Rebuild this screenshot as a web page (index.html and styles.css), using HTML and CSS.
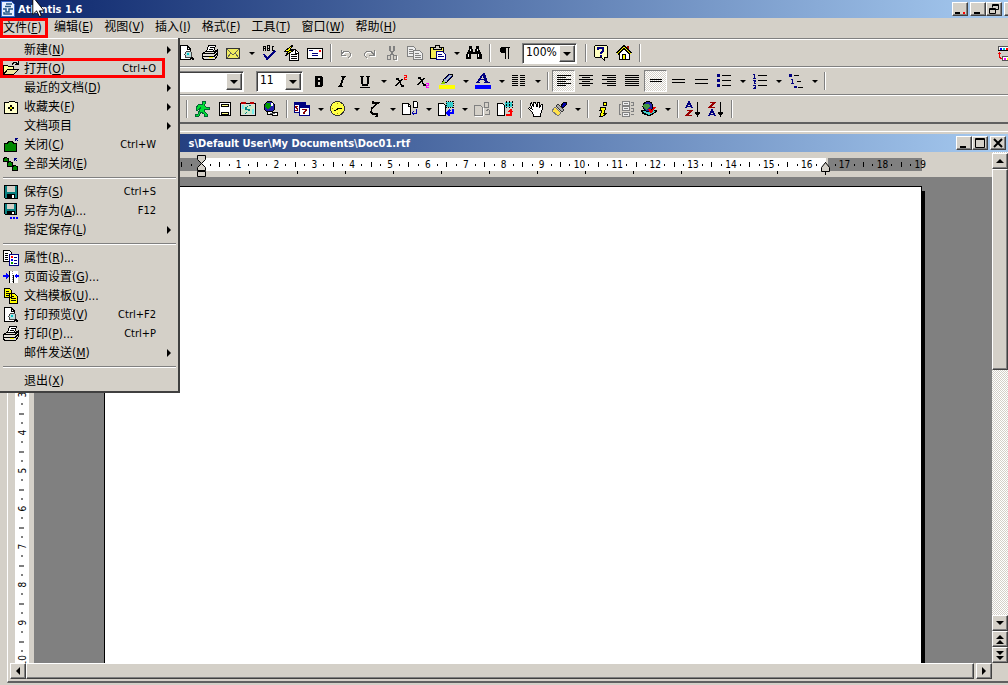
FILE: index.html
```
<!DOCTYPE html>
<html lang="zh-CN">
<head>
<meta charset="UTF-8">
<meta name="viewport" content="width=device-width, initial-scale=1.0">
<title>Atlantis 1.6</title>
<link rel="stylesheet" href="styles.css">
</head>
<body>
<svg class="sprite" aria-hidden="true">
  <symbol id="i-preview" viewBox="0 0 16 16"><path d="M1 .5h7l3 3v11H1z" fill="#fff" stroke="#000"/><path d="M8 1v3h3" fill="none" stroke="#000"/><path d="M12 12l3 3" stroke="#000" stroke-width="2"/><circle cx="9.500" cy="9.500" r="3.500" fill="#bdd" stroke="#444"/><path d="M8 8h2v2H8z" fill="#0cc"/></symbol>
  <symbol id="i-print" viewBox="0 0 16 16"><path d="M4.500 6.500l2-6h7l-2 6z" fill="#fff" stroke="#000"/><path d="M8 2.500h4M7 4.500h4" stroke="#000"/><path d="M.5 8.500l3-2h9l3-2v6l-3 4h-11l-1-2z" fill="#e4e0d8" stroke="#000"/><path d="M1 8.500h11l3-3M1 11.500h11l3-3" fill="none" stroke="#000"/><path d="M7 12h4v1H7z" fill="#ff0"/></symbol>
  <symbol id="i-mail" viewBox="0 0 16 16"><path d="M1.500 3.500h13v10h-13z" fill="#f0ec60" stroke="#333"/><path d="M2 4l6 6 6-6M2 13l4-5M14 13l-4-5" fill="none" stroke="#665"/></symbol>
  <symbol id="i-spell" viewBox="0 0 16 16"><path d="M2.500 6V1.500h2V6M2.500 3.500h2M6.500.5v5h2v-5zM6.500 3.500h2M13 1.500h-2v4h2" fill="none" stroke="#000"/><path d="M3 9l3 5 8-8" fill="none" stroke="#000080" stroke-width="2"/></symbol>
  <symbol id="i-autocor" viewBox="0 0 16 16"><path d="M5.500 4.500h6l3 3v8h-9z" fill="#fff" stroke="#000"/><path d="M11 5v3h3M7 9.500h6M7 11.500h6M7 13.500h6" stroke="#000" fill="none"/><path d="M9 0L1 6h4l-4 5 9-6H6z" fill="#ff0" stroke="#000"/></symbol>
  <symbol id="i-card" viewBox="0 0 16 16"><path d="M.5 3.500h15v10H.5z" fill="#fff" stroke="#000"/><path d="M12 5h2v2h-2z" fill="#f00"/><path d="M2 5.500h4M5 8.500h6M5 10.500h6" stroke="#000080"/></symbol>
  <symbol id="i-undo" viewBox="0 0 16 16"><path d="M3 5v5h5M3 10c3-6 11-4 9 1l-2 2" fill="none" stroke="#fff" transform="translate(1 1)"/><path d="M3 5v5h5M3 10c3-6 11-4 9 1l-2 2" fill="none" stroke="#808080"/></symbol>
  <symbol id="i-redo" viewBox="0 0 16 16"><path d="M13 5v5H8M13 10C10 4 2 6 4 11l2 2" fill="none" stroke="#fff" transform="translate(1 1)"/><path d="M13 5v5H8M13 10C10 4 2 6 4 11l2 2" fill="none" stroke="#808080"/></symbol>
  <symbol id="i-cut" viewBox="0 0 16 16"><path d="M6 1v4l4 6M10 1v4l-4 6" fill="none" stroke="#808080" stroke-width="1.500"/><path d="M3.500 10.500h3v4h-3zM9.500 10.500h3v4h-3z" fill="none" stroke="#808080"/><path d="M13.500 11v4h-3" fill="none" stroke="#fff"/></symbol>
  <symbol id="i-copy" viewBox="0 0 16 16"><path d="M.5 1.500h6l2 2v8h-8z" fill="#eee" stroke="#808080"/><path d="M2 4.500h4M2 6.500h4M2 8.500h4" stroke="#808080"/><path d="M6.500 5.500h6l3 3v6h-9z" fill="#eee" stroke="#808080"/><path d="M8 8.500h4M8 10.500h6M8 12.500h6" stroke="#808080"/></symbol>
  <symbol id="i-paste" viewBox="0 0 16 16"><path d="M.5 2.500h13v11H.5z" fill="#f5ee58" stroke="#000"/><path d="M3 4V2h2V.5h4V2h2v2z" fill="#d4d0c8" stroke="#000"/><path d="M6.500 6.500h6l3 3v5h-9z" fill="#fff" stroke="#000080"/><path d="M8 9.500h4M8 11.500h6" stroke="#000080"/></symbol>
  <symbol id="i-find" viewBox="0 0 16 16"><path d="M3 1h3v3h1v3h2V4h1V1h3v3l3 6v4h-5V9H5v5H0v-4l3-6z" fill="#000"/><path d="M4 4h1v2H4zM2 9h1v3H2zM11 4h1v2h-1zM12 9h1v3h-1z" fill="#fff"/></symbol>
  <symbol id="i-para" viewBox="0 0 16 16"><path d="M13 2H6a3 3 0 0 0 0 6h2v6h1V3h2v11h1V3h1z" fill="#000"/></symbol>
  <symbol id="i-help" viewBox="0 0 16 16"><path d="M2.500.5h11l1 1v11h-3v3l-3-3h-6l-1-1v-10z" fill="#ffffc0" stroke="#000"/><path d="M5 5V3h5v3L8 8v1M8 10v2" fill="none" stroke="#000080" stroke-width="2"/></symbol>
  <symbol id="i-home" viewBox="0 0 16 16"><path d="M11 1h2v6h-2z" fill="#900"/><path d="M3.500 7v7.500h10V7l-5-5z" fill="#fff" stroke="#000"/><path d="M1 9l7-7 7 7" fill="none" stroke="#000" stroke-width="3"/><path d="M1 9l7-7 7 7" fill="none" stroke="#ff0"/><path d="M6.500 9.500h3v5h-3z" fill="#ff0" stroke="#000"/></symbol>
  <symbol id="i-bold" viewBox="0 0 16 16"><path d="M4 3h6l2 2v2l-1 1 1 1v3l-2 2H4zM7 5v2h2V5zM7 9v3h2V9z" fill="#000" fill-rule="evenodd"/></symbol>
  <symbol id="i-italic" viewBox="0 0 16 16"><path d="M7 3.500h5M4 13.500h5" stroke="#000"/><path d="M10 3L6 14" stroke="#000" stroke-width="2"/></symbol>
  <symbol id="i-under" viewBox="0 0 16 16"><path d="M3 3.500h4M9 3.500h4M3 14.500h10" stroke="#000"/><path d="M5 3v7l1 2h4l1-2V3" fill="none" stroke="#000" stroke-width="1.500"/></symbol>
  <symbol id="i-sup" viewBox="0 0 16 16"><path d="M3 6h2l4 7h2M9 6L3 13" fill="none" stroke="#000" stroke-width="1.500"/><path d="M11 2.500h2.500v2h-2v2H14" fill="none" stroke="#f00"/></symbol>
  <symbol id="i-sub" viewBox="0 0 16 16"><path d="M2 5h2l4 7h2M8 5L2 12" fill="none" stroke="#000" stroke-width="1.500"/><path d="M10 10.500h2.500v2h-2v2H13" fill="none" stroke="#f0f"/></symbol>
  <symbol id="i-marker" viewBox="0 0 16 16"><path d="M0 12h16v4H0z" fill="#ff0"/><path d="M3 10l2-4 5-5h3v3L8 9z" fill="#abc" stroke="#000"/><path d="M6 6l5-5M8 8l5-5" stroke="#000080"/><path d="M1 11l3-3 2 2-1 1z" fill="#8c0"/></symbol>
  <symbol id="i-color" viewBox="0 0 16 16"><path d="M0 12h16v4H0z" fill="#00f"/><path d="M8 0h2l3 9h2v1H9V9h1L9 7H5L4 9h1v1H1V9h1L6 2zM7.500 3L6 6h3z" fill="#000080"/></symbol>
  <symbol id="i-cols" viewBox="0 0 16 16"><path d="M1 2.500h6M1 4.500h6M1 6.500h6M1 8.500h6M1 10.500h6M1 12.500h6M9 2.500h5M9 4.500h5M9 6.500h5M9 8.500h5M9 10.500h5M9 12.500h5" stroke="#000"/></symbol>
  <symbol id="i-left" viewBox="0 0 16 16"><path d="M1 2.500h14M1 4.500h9M1 6.500h14M1 8.500h9M1 10.500h14M1 12.500h9" stroke="#000"/></symbol>
  <symbol id="i-center" viewBox="0 0 16 16"><path d="M1 2.500h14M4 4.500h8M1 6.500h14M4 8.500h8M1 10.500h14M4 12.500h8" stroke="#000"/></symbol>
  <symbol id="i-right" viewBox="0 0 16 16"><path d="M1 2.500h14M6 4.500h9M1 6.500h14M6 8.500h9M1 10.500h14M6 12.500h9" stroke="#000"/></symbol>
  <symbol id="i-just" viewBox="0 0 16 16"><path d="M1 2.500h14M1 4.500h14M1 6.500h14M1 8.500h14M1 10.500h14M1 12.500h14" stroke="#000"/></symbol>
  <symbol id="i-sp1" viewBox="0 0 16 16"><path d="M2 6.500h12M2 8.500h12" stroke="#000"/></symbol>
  <symbol id="i-sp2" viewBox="0 0 16 16"><path d="M2 6.500h13M2 9.500h13" stroke="#000"/></symbol>
  <symbol id="i-sp3" viewBox="0 0 16 16"><path d="M2 6.500h13M2 10.500h13" stroke="#000"/></symbol>
  <symbol id="i-bullets" viewBox="0 0 16 16"><path d="M1 1h3v3H1zM1 6h3v3H1zM1 11h3v3H1z" fill="#000080"/><path d="M6 2.500h9M6 7.500h9M6 12.500h9" stroke="#000"/></symbol>
  <symbol id="i-numbers" viewBox="0 0 16 16"><path d="M1 1.500h1.500V5M1 5.500h3M1 7.500h2.500v1H2v2h2M1 12.500h2.500v3H1M2 14.500h1" fill="none" stroke="#000080"/><path d="M6 2.500h9M6 7.500h9M6 12.500h9" stroke="#000"/></symbol>
  <symbol id="i-outline" viewBox="0 0 16 16"><path d="M1 1h3v3H1zM6 13h3v2H6z" fill="#000080"/><path d="M3 6.500h1.500v4M3 10.500h3" fill="none" stroke="#000080"/><path d="M6 2.500h5M9 8.500h4M10 14.500h5" stroke="#000"/></symbol>
  <symbol id="i-run" viewBox="0 0 16 16"><path d="M8 0h3v3l-1 1 2 2h3v2h-4l-1 2 3 3v2h-3v-2l-3-2-2 4H1v-2h3l2-5V7L4 9H2V7l3-4h3z" fill="#0d3" stroke="#063"/></symbol>
  <symbol id="i-headfoot" viewBox="0 0 16 16"><path d="M2.500 1.500h11v13h-11z" fill="#fff" stroke="#000"/><path d="M4.500 3.500h7v2h-7zM4.500 11.500h7v2h-7z" fill="#ff8" stroke="#000"/></symbol>
  <symbol id="i-image" viewBox="0 0 16 16"><path d="M.5 2.500h15v12H.5z" fill="#ddd" stroke="#000"/><path d="M1 1h5v2H1zM10 1h4v2h-4z" fill="#b00"/><path d="M2 4h12v9H2z" fill="#cfe8c8"/><path d="M11 4v1H8v1H7v2h3v2H8v1H6v2H5v-1h2v-1h1V9H5V6h2V5h2V4z" fill="#088"/><path d="M2 4h2v4H2zM12 8h2v5h-2z" fill="#7ee"/></symbol>
  <symbol id="i-web" viewBox="0 0 16 16"><circle cx="6.500" cy="6" r="5.500" fill="#22a" stroke="#000"/><path d="M3 2h4l1 3-3 3-3-2z" fill="#090"/><path d="M8 2h2v3H8z" fill="#fff"/><path d="M4.500 10.500h5v3h-5zM9.500 11.500h5v3h-5z" fill="#fff" stroke="#000"/><path d="M7 12.500h5" stroke="#666"/></symbol>
  <symbol id="i-date" viewBox="0 0 16 16"><path d="M0 1h12v11H0zM5 4h11v11H5z" fill="#000080"/><path d="M1 4h4v7H1zM6 7h9v7H6z" fill="#fff"/><path d="M1 5h3v1H3v1h1v3H1V9h2V8H2V7H1z" fill="#800"/><path d="M8 8h5v2h-1v1h-1v2H9v-2h1v-1h1V9H8z" fill="#800"/></symbol>
  <symbol id="i-clock" viewBox="0 0 16 16"><circle cx="7.500" cy="7.500" r="7" fill="#ff4" stroke="#333"/><path d="M7 7h5v1H7zM6 8h2v1H6zM4 9h2v1H4z" fill="#000"/><path d="M7 2h1v1H7zM7 12h1v1H7zM2 7h1v1H2z" fill="#a80"/></symbol>
  <symbol id="i-zeta" viewBox="0 0 16 16"><path d="M7 0v2h5L6 7l-1 4 2 2h4v2l-2 1" fill="none" stroke="#000" stroke-width="1.500"/></symbol>
  <symbol id="i-flow" viewBox="0 0 16 16"><path d="M.5 2.500h6l2 2v9h-8zM11.500.5h3l1 1v5h-4z" fill="#fff" stroke="#000"/><path d="M6.500 3v2h2" fill="none" stroke="#000"/><path d="M14.500 8v4H10m2-2l-2 2 2 2" fill="none" stroke="#00a"/></symbol>
  <symbol id="i-flow2" viewBox="0 0 16 16"><path d="M.5 2.500h5l2 2v10h-7z" fill="#fff" stroke="#000"/><path d="M8 1h7v5H8z" fill="#3cc"/><path d="M8.500 0v7M15.500 0v7M8 .5h8M8 6.500h8" stroke="#000" stroke-dasharray="1 1"/><path d="M15 8v4h-5m2-3l-3 3 3 3" fill="none" stroke="#00f" stroke-width="1.500"/></symbol>
  <symbol id="i-flow3" viewBox="0 0 16 16"><path d="M.5 4.500h6l2 2v8h-8zM10.500 1.500h4v5h-4z" fill="#d4d0c8" stroke="#808080"/><path d="M15 9v4h-4M12 10l3-2" fill="none" stroke="#808080"/><path d="M1 15.500h8M9.500 7v8" stroke="#fff"/></symbol>
  <symbol id="i-flow4" viewBox="0 0 16 16"><path d="M.5 2.500h5l2 2v10h-7z" fill="#fff" stroke="#000"/><path d="M8 1h7v5H8z" fill="#3cc"/><path d="M9.500 0v7M12.500 0v7M15.500 0v7" stroke="#000" stroke-dasharray="2 1"/><path d="M9 13h4v-2h-2l3-4 2 4h-1v4H9z" fill="#f00"/></symbol>
  <symbol id="i-hand" viewBox="0 0 16 16"><path d="M4 11L.5 7.500l1-1L4 8 2.500 3l1-1L6 6 5.500 1h2L9 6l.5-5h2V7l2-4h1.500l-1 6-2 6.500H6z" fill="#fff" stroke="#000"/></symbol>
  <symbol id="i-brush" viewBox="0 0 16 16"><path d="M10 5l3-4h2v3l-3 3z" fill="#00a" stroke="#000"/><path d="M7 3l6 6-2 2-6-6z" fill="#aaa" stroke="#333"/><path d="M4 6l6 6-3 3-6-5z" fill="#ffe14a" stroke="#777"/></symbol>
  <symbol id="i-info" viewBox="0 0 16 16"><path d="M8 1h3v3H8zM6 6h5l-2 6h2v1l-3 2H5l2-6H5z" fill="#ff0" stroke="#000"/></symbol>
  <symbol id="i-sheets" viewBox="0 0 16 16"><path d="M4.500.5h7v4h-7zM4.500 5.500h7v4h-7zM4.500 11.500h7v4h-7z" fill="#eee" stroke="#808080"/><path d="M6 2.500h4M6 7.500h4M6 13.500h4M3 3.500H1.500v10H3M13 1.500h2.500v3H13M13 7.500h2.500v3H13M13 13.500h3" fill="none" stroke="#808080"/></symbol>
  <symbol id="i-books" viewBox="0 0 16 16"><path d="M0 10l8-3 8 3-8 5z" fill="#4cc" stroke="#000"/><path d="M1 12l7 3 7-4" fill="none" stroke="#000"/><circle cx="7" cy="5.500" r="5" fill="#22a" stroke="#000"/><path d="M3 3h4l2 2-3 4-4-3z" fill="#494"/><path d="M8 8l2 3 4-5" fill="none" stroke="#e00" stroke-width="2"/></symbol>
  <symbol id="i-az" viewBox="0 0 16 16"><path d="M1 7l3-6 3 6M2 5.500h4" fill="none" stroke="#000080" stroke-width="1.500"/><path d="M1.500 9.500h5l-5 5h5" fill="none" stroke="#900" stroke-width="1.500"/><path d="M12.500 1v13M10 11h5l-2.500 4z" stroke="#000"/></symbol>
  <symbol id="i-za" viewBox="0 0 16 16"><path d="M1.500 1.500h5l-5 5h5" fill="none" stroke="#900" stroke-width="1.500"/><path d="M1 15l3-6 3 6M2 13.500h4" fill="none" stroke="#000080" stroke-width="1.500"/><path d="M12.500 1v13M10 11h5l-2.500 4z" stroke="#000"/></symbol>
  <symbol id="i-bars" viewBox="0 0 16 16"><path d="M.5 1.500h15v4H.5zM4.500 11.500h11v4h-11z" fill="#fff" stroke="#555"/><path d="M0 5.500h16" stroke="#000"/><path d="M2 3h2v2H2z" fill="#00f"/><path d="M5 3h2v2H5z" fill="#0cc"/><path d="M8 3h2v2H8z" fill="#f00"/><path d="M6 13h2v2H6z" fill="#f0f"/><path d="M9 13h2v2H9z" fill="#ff0"/><path d="M0 8.500h3M1.500 7v5l2 2" fill="none" stroke="#e00"/></symbol>
  <symbol id="i-open" viewBox="0 0 16 16"><path d="M.5 13.500v-9h4l1 1h5v3" fill="#ff9" stroke="#000"/><path d="M.5 13.500l4-5h11l-5 5z" fill="#eeeaa0" stroke="#000"/><path d="M9 3.500l2-2h2l2 2M15.500 0v3.500H12" fill="none" stroke="#000"/></symbol>
  <symbol id="i-fav" viewBox="0 0 16 16"><path d="M1.500 3.500h4l1-1h5l1 1h2v11h-13z" fill="#ffc" stroke="#000"/><path d="M7 6h2v2h2v2H9v2H7v-2H5V8h2z" fill="#000"/><path d="M7 8h2v2H7z" fill="#ee0"/></symbol>
  <symbol id="i-close" viewBox="0 0 16 16"><path d="M1.500 6.500h3l1-2h4l1 2h3v8h-12z" fill="#080" stroke="#000"/><path d="M15 4l-3-3m0 3V1h3" fill="none" stroke="#000080"/></symbol>
  <symbol id="i-closeall" viewBox="0 0 16 16"><path d="M.5 2.500l2-1 3 1v3h-5zM4.500 6.500l2-1 3 1v4h-5zM9.500 10.500l2-1 3 1v4h-5z" fill="#080" stroke="#000"/><path d="M14 5l-3-3m0 3V2h3" fill="none" stroke="#000080"/></symbol>
  <symbol id="i-save" viewBox="0 0 16 16"><path d="M1.500 1.500h13v13h-12l-1-1z" fill="#088080" stroke="#000"/><path d="M4 2h8v6H4z" fill="#d4d0c8"/><path d="M4 10h8v4H4z" fill="#000"/><path d="M9 11h2v3H9z" fill="#fff"/></symbol>
  <symbol id="i-saveas" viewBox="0 0 16 16"><path d="M1.500.5h12v11h-11l-1-1z" fill="#088080" stroke="#000"/><path d="M4 1h7v5H4z" fill="#d4d0c8"/><path d="M4 8h8v4H4z" fill="#000"/><path d="M9 9h2v2H9z" fill="#fff"/><path d="M7 14h2v2H7zM10 14h2v2h-2zM13 14h2v2h-2z" fill="#00f"/></symbol>
  <symbol id="i-props" viewBox="0 0 16 16"><path d="M.5.5h6l2 2v9h-8z" fill="#fff" stroke="#000"/><path d="M2 3.500h3M2 5.500h3M2 7.500h3M2 9.500h3" stroke="#000"/><path d="M6.500 4.500h9v11h-9z" fill="#fff" stroke="#000080"/><path d="M8 6h2v2H8z" fill="#f00"/><path d="M8 9h2v2H8z" fill="#00f"/><path d="M8 12h2v2H8z" fill="#090"/><path d="M11 7.500h3M11 10.500h3M11 13.500h3" stroke="#000080"/></symbol>
  <symbol id="i-pagesetup" viewBox="0 0 16 16"><path d="M7 2h8v12H7z" fill="#fff"/><path d="M6 2h1v12H6zM10 6h1v8h-1z" fill="#000"/><path d="M9.500 2v12" stroke="#888" stroke-dasharray="1 1"/><path d="M0 6h3V4l3 3-3 3V8H0zM16 6h-2V4l-3 3 3 3V8h2z" fill="#00f"/></symbol>
  <symbol id="i-template" viewBox="0 0 16 16"><path d="M1.500.5h5l2 2v7h-7zM6.500 5.500h5l3 3v7h-8z" fill="#ff0" stroke="#000"/><path d="M3 3.500h3M3 5.500h4M3 7.500h3M8 8.500h3M8 10.500h5M8 12.500h5" stroke="#000"/></symbol>
</svg>

<div class="app">
  <header class="titlebar">
    <svg class="logo" viewBox="0 0 16 16"><path d="M1.500.5h10l3 3v12h-13z" fill="#e8f0ff" stroke="#36c"/><path d="M6 3h6M5 5.500h6M3 8h3v3h3V8h4M4 11v2h8" fill="none" stroke="#258" stroke-width="1.500"/></svg>
    <span class="caption">Atlantis 1.6</span>
    <div class="winbtns">
      <button class="wb gap" aria-label="托盘"><svg viewBox="0 0 12 10"><path d="M1 8h5v2H1z"/><path d="M9 8h2v2H9z" fill="red"/></svg></button>
      <button class="wb" aria-label="最小化"><svg viewBox="0 0 12 10"><path d="M2 8h6v2H2z"/></svg></button>
      <button class="wb gap" aria-label="还原"><svg viewBox="0 0 12 10"><path d="M4.500 3.500v-3h6v5h-3M4 1.500h7M1.500 4.500h6v5h-6zM1 5.500h7" fill="none" stroke="#000"/></svg></button>
      <button class="wb" aria-label="关闭"></button>
    </div>
    <svg class="cursor" viewBox="0 0 12 19"><path d="M.5-3.500v19l4-4 3 6 2-1-2-5h5z" fill="#fff" stroke="#000"/></svg>
  </header>

  <nav class="menubar">
    <button class="open">文件(<u>F</u>)</button>
    <button>编辑(<u>E</u>)</button>
    <button>视图(<u>V</u>)</button>
    <button>插入(<u>I</u>)</button>
    <button>格式(<u>F</u>)</button>
    <button>工具(<u>T</u>)</button>
    <button>窗口(<u>W</u>)</button>
    <button>帮助(<u>H</u>)</button>

    <div class="menu">
      <button class="item sub"><span>新建(<u>N</u>)</span></button>
      <button class="item marked"><svg><use href="#i-open"/></svg><span>打开(<u>O</u>)</span><kbd>Ctrl+O</kbd></button>
      <button class="item sub"><span>最近的文档(<u>D</u>)</span></button>
      <button class="item sub"><svg><use href="#i-fav"/></svg><span>收藏夹(<u>F</u>)</span></button>
      <button class="item sub"><span>文档项目</span></button>
      <button class="item"><svg><use href="#i-close"/></svg><span>关闭(<u>C</u>)</span><kbd>Ctrl+W</kbd></button>
      <button class="item"><svg><use href="#i-closeall"/></svg><span>全部关闭(<u>E</u>)</span></button>
      <hr>
      <button class="item"><svg><use href="#i-save"/></svg><span>保存(<u>S</u>)</span><kbd>Ctrl+S</kbd></button>
      <button class="item"><svg><use href="#i-saveas"/></svg><span>另存为(<u>A</u>)...</span><kbd>F12</kbd></button>
      <button class="item sub"><span>指定保存(<u>L</u>)</span></button>
      <hr>
      <button class="item"><svg><use href="#i-props"/></svg><span>属性(<u>R</u>)...</span></button>
      <button class="item"><svg><use href="#i-pagesetup"/></svg><span>页面设置(<u>G</u>)...</span></button>
      <button class="item"><svg><use href="#i-template"/></svg><span>文档模板(<u>U</u>)...</span></button>
      <button class="item"><svg><use href="#i-preview"/></svg><span>打印预览(<u>V</u>)</span><kbd>Ctrl+F2</kbd></button>
      <button class="item"><svg><use href="#i-print"/></svg><span>打印(<u>P</u>)...</span><kbd>Ctrl+P</kbd></button>
      <button class="item sub"><span>邮件发送(<u>M</u>)</span></button>
      <hr>
      <button class="item"><span>退出(<u>X</u>)</span></button>
    </div>
  </nav>

  <div class="toolbar main-tools">
    <button class="tb" aria-label="打印预览"><svg><use href="#i-preview"/></svg></button>
    <button class="tb" aria-label="打印"><svg><use href="#i-print"/></svg></button>
    <button class="tb" aria-label="邮件"><svg><use href="#i-mail"/></svg></button>
    <button class="drop" aria-label="更多"></button>
    <button class="tb" aria-label="拼写"><svg><use href="#i-spell"/></svg></button>
    <button class="tb" aria-label="自动更正"><svg><use href="#i-autocor"/></svg></button>
    <button class="tb" aria-label="信封"><svg><use href="#i-card"/></svg></button>
    <i class="sep"></i>
    <button class="tb" aria-label="撤消"><svg><use href="#i-undo"/></svg></button>
    <button class="tb" aria-label="恢复"><svg><use href="#i-redo"/></svg></button>
    <button class="tb" aria-label="剪切"><svg><use href="#i-cut"/></svg></button>
    <button class="tb" aria-label="复制"><svg><use href="#i-copy"/></svg></button>
    <button class="tb" aria-label="粘贴"><svg><use href="#i-paste"/></svg></button>
    <button class="drop" aria-label="更多"></button>
    <button class="tb" aria-label="查找"><svg><use href="#i-find"/></svg></button>
    <i class="sep"></i>
    <button class="tb" aria-label="段落标记"><svg><use href="#i-para"/></svg></button>
    <div class="combo zoom"><select aria-label="显示比例"><option>100%</option></select></div>
    <i class="sep"></i>
    <button class="tb" aria-label="帮助"><svg><use href="#i-help"/></svg></button>
    <button class="tb" aria-label="主页"><svg><use href="#i-home"/></svg></button>
    <i class="sep"></i>
    <button class="tb end" aria-label="工具栏"><svg><use href="#i-bars"/></svg></button>
  </div>

  <div class="toolbar format-tools">
    <div class="combo font"><select aria-label="字体"><option></option></select></div>
    <div class="combo size"><select aria-label="字号"><option>11</option></select></div>
    <button class="tb" aria-label="加粗"><svg><use href="#i-bold"/></svg></button>
    <button class="tb" aria-label="倾斜"><svg><use href="#i-italic"/></svg></button>
    <button class="tb" aria-label="下划线"><svg><use href="#i-under"/></svg></button>
    <button class="drop" aria-label="更多"></button>
    <button class="tb" aria-label="上标"><svg><use href="#i-sup"/></svg></button>
    <button class="tb" aria-label="下标"><svg><use href="#i-sub"/></svg></button>
    <button class="tb" aria-label="突出显示"><svg><use href="#i-marker"/></svg></button>
    <button class="drop" aria-label="更多"></button>
    <button class="tb" aria-label="字体颜色"><svg><use href="#i-color"/></svg></button>
    <button class="drop" aria-label="更多"></button>
    <button class="tb" aria-label="分栏"><svg><use href="#i-cols"/></svg></button>
    <button class="drop" aria-label="更多"></button>
    <i class="sep"></i>
    <button class="tb pressed" aria-label="左对齐"><svg><use href="#i-left"/></svg></button>
    <button class="tb" aria-label="居中"><svg><use href="#i-center"/></svg></button>
    <button class="tb" aria-label="右对齐"><svg><use href="#i-right"/></svg></button>
    <button class="tb" aria-label="两端对齐"><svg><use href="#i-just"/></svg></button>
    <button class="tb pressed" aria-label="单倍行距"><svg><use href="#i-sp1"/></svg></button>
    <button class="tb" aria-label="1.5 倍行距"><svg><use href="#i-sp2"/></svg></button>
    <button class="tb" aria-label="双倍行距"><svg><use href="#i-sp3"/></svg></button>
    <button class="tb" aria-label="项目符号"><svg><use href="#i-bullets"/></svg></button>
    <button class="drop" aria-label="更多"></button>
    <button class="tb" aria-label="编号"><svg><use href="#i-numbers"/></svg></button>
    <button class="drop" aria-label="更多"></button>
    <button class="tb" aria-label="多级列表"><svg><use href="#i-outline"/></svg></button>
    <button class="drop" aria-label="更多"></button>
    <i class="sep"></i>
  </div>

  <div class="toolbar insert-tools">
    <i class="sep"></i>
    <button class="tb" aria-label="转到"><svg><use href="#i-run"/></svg></button>
    <button class="tb" aria-label="页眉页脚"><svg><use href="#i-headfoot"/></svg></button>
    <button class="tb" aria-label="图片"><svg><use href="#i-image"/></svg></button>
    <button class="tb" aria-label="超链接"><svg><use href="#i-web"/></svg></button>
    <i class="sep"></i>
    <button class="tb" aria-label="日期"><svg><use href="#i-date"/></svg></button>
    <button class="drop" aria-label="更多"></button>
    <button class="tb" aria-label="时间"><svg><use href="#i-clock"/></svg></button>
    <button class="drop" aria-label="更多"></button>
    <button class="tb" aria-label="符号"><svg><use href="#i-zeta"/></svg></button>
    <button class="drop" aria-label="更多"></button>
    <button class="tb" aria-label="分页"><svg><use href="#i-flow"/></svg></button>
    <button class="drop" aria-label="更多"></button>
    <button class="tb" aria-label="分节"><svg><use href="#i-flow2"/></svg></button>
    <button class="drop" aria-label="更多"></button>
    <button class="tb" aria-label="上一节"><svg><use href="#i-flow3"/></svg></button>
    <button class="tb" aria-label="下一节"><svg><use href="#i-flow4"/></svg></button>
    <i class="sep"></i>
    <button class="tb" aria-label="手形"><svg><use href="#i-hand"/></svg></button>
    <button class="tb" aria-label="格式刷"><svg><use href="#i-brush"/></svg></button>
    <button class="drop" aria-label="更多"></button>
    <i class="sep"></i>
    <button class="tb" aria-label="信息"><svg><use href="#i-info"/></svg></button>
    <button class="tb" aria-label="页面"><svg><use href="#i-sheets"/></svg></button>
    <button class="tb" aria-label="词典"><svg><use href="#i-books"/></svg></button>
    <button class="drop" aria-label="更多"></button>
    <i class="sep"></i>
    <button class="tb" aria-label="升序"><svg><use href="#i-az"/></svg></button>
    <button class="tb" aria-label="降序"><svg><use href="#i-za"/></svg></button>
    <i class="sep"></i>
  </div>

  <main class="doc">
    <div class="titlebar doc-title">
      <span class="caption path">s\Default User\My Documents\Doc01.rtf</span>
      <div class="winbtns">
        <button class="wb" aria-label="最小化"><svg viewBox="0 0 12 10"><path d="M2 8h6v2H2z"/></svg></button>
        <button class="wb gap" aria-label="最大化"><svg viewBox="0 0 12 10"><path d="M1.500.5h9v9h-9zM1 1.500h10" fill="none" stroke="#000"/></svg></button>
        <button class="wb" aria-label="关闭"><svg viewBox="0 0 12 10"><path d="M2 1l8 8M10 1L2 9" stroke="#000" stroke-width="2"/></svg></button>
      </div>
    </div>
    <div class="work">
      <div class="hruler-row">
        <div class="hruler">
          <div class="marks" id="hmarks"></div>
          <svg class="indent" viewBox="0 0 11 24"><path d="M1.500.5h8v4l-4 4 4 4v3h-8v-3l4-4-4-4zM1.500 16.500h8v5h-8z" fill="#d4d0c8" stroke="#000"/></svg>
          <svg class="indent-right" viewBox="0 0 11 13"><path d="M5.500.5l4 5v4h-8v-4zM5.500 9v4" fill="#d4d0c8" stroke="#000"/></svg>
        </div>
      </div>
      <div class="vruler"><div class="vmarks" id="vmarks"></div></div>
      <div class="canvas"><div class="page"></div></div>
      <div class="vscroll">
        <button class="sb up" aria-label="向上"></button>
        <div class="thumb"></div>
        <button class="sb down" aria-label="向下"></button>
        <button class="sb up twice" aria-label="上一页"></button>
        <button class="sb down twice" aria-label="下一页"></button>
      </div>
      <div class="hscroll">
        <button class="sb left" aria-label="向左"></button>
        <div class="thumb"></div>
        <button class="sb right" aria-label="向右"></button>
      </div>
    </div>
  </main>
</div>

<script>
// four marks per centimetre: dot, tick, dot, number
function mark(k) {
  if (k == 0) return '<span></span>';
  if (k > 0 && k % 4 == 0) return '<span>' + k / 4 + '</span>';
  return k % 2 == 0 ? '<span class="tick"></span>' : '<span class="dot"></span>';
}

let h = '';
for (let k = -2; k <= 76; k++) h += mark(k);
document.getElementById("hmarks").innerHTML = h;

let v = '';
for (let k = 1; k <= 40; k++) v += mark(k);
document.getElementById("vmarks").innerHTML = v;
</script>
</body>
</html>
```
FILE: styles.css
```
*, *::before, *::after {
  box-sizing: border-box;
}
body {
  margin: 0;
  background-color: #d4d0c8;
  color: #000;
  font-family: "DejaVu Sans Condensed", "Noto Sans CJK SC", sans-serif;
  font-size: 12px;
}
button {
  font: inherit;
  color: inherit;
  margin: 0;
  padding: 0;
  border: 0;
  background: none;
}
.sprite {
  display: none;
}
.app {
  display: flex;
  flex-direction: column;
  height: 100vh;
  overflow: hidden;
}

/* title bars */
.titlebar {
  display: flex;
  align-items: center;
  flex: none;
  height: 18px;
  position: relative;
  background: linear-gradient(to right, #0a246a, #a6caf0);
  overflow: hidden;
}
.logo {
  width: 16px;
  height: 16px;
  margin-right: 2px;
}
.caption {
  color: #fff;
  font-size: 11px;
  font-weight: bold;
  white-space: pre;
}
.path {
  width: 400px;
  text-align: right;
}
.winbtns {
  display: flex;
  margin-left: auto;
  margin-right: -12px;
}
.doc-title .winbtns {
  margin-right: 2px;
}
.wb {
  width: 16px;
  height: 14px;
  background-color: #d4d0c8;
  border: 1px solid;
  border-color: #fff #404040 #404040 #fff;
  box-shadow: inset -1px -1px #808080;
}
.wb.gap {
  margin-right: 2px;
}
.wb svg {
  display: block;
  width: 12px;
  height: 10px;
  margin: 0 auto;
}
.cursor {
  position: absolute;
  left: 32px;
  top: 0;
  width: 12px;
  height: 18px;
}

/* menu */
.menubar {
  display: flex;
  flex: none;
  gap: 11px;
  height: 21px;
  padding-left: 54px;
  padding-bottom: 2px;
  position: relative;
  z-index: 2;
  border-bottom: 1px solid #808080;
  line-height: 16px;
}
.menubar > .open {
  width: 48px;
  height: 20px;
  margin-left: -54px;
  margin-right: -5px;
  line-height: 14px;
  border: 3px solid #f00;
  text-align: left;
}
.menu {
  position: absolute;
  left: 0;
  top: 20px;
  width: 180px;
  padding: 2px 4px 1px 2px;
  background-color: #d4d0c8;
  border-right: 2px solid #404040;
  border-bottom: 2px solid #404040;
  box-shadow: inset 0 1px #fff;
}
.item {
  display: flex;
  align-items: center;
  width: 100%;
  height: 19px;
  padding-left: 22px;
  position: relative;
  text-align: left;
}
.item svg {
  width: 16px;
  height: 16px;
  margin-left: -21px;
  margin-right: 5px;
}
.item kbd {
  margin-left: auto;
  margin-right: 18px;
  font-family: inherit;
  font-size: 11px;
}
.item.sub::after {
  content: "";
  margin-left: auto;
  margin-right: 3px;
  border: 4px solid transparent;
  border-left-color: #000;
  border-right: 0;
}
.item.marked::before {
  content: "";
  position: absolute;
  left: -2px;
  top: -1px;
  width: 165px;
  height: 20px;
  border: 3px solid #f00;
}
.menu hr {
  margin: 4px -2px 3px 1px;
  border: 0;
  border-top: 1px solid #808080;
  border-bottom: 1px solid #fff;
}

/* toolbars */
.toolbar {
  display: flex;
  align-items: center;
  flex: none;
  height: 28px;
  border-top: 1px solid #fff;
  border-bottom: 1px solid #808080;
  overflow: hidden;
}
.main-tools {
  padding-left: 176px;
}
.format-tools {
  padding-left: 84px;
}
.insert-tools {
  height: 29px;
  padding-left: 183px;
  border-bottom: 2px solid #606060;
}
.tb {
  flex: none;
  width: 23px;
  height: 22px;
}
.tb svg {
  display: block;
  width: 16px;
  height: 16px;
  margin: 0 3px;
}
.tb svg, .item svg {
  shape-rendering: crispEdges;
}
.tb.end {
  margin-left: auto;
  margin-right: -10px;
}
.tb.pressed, .vscroll {
  background: repeating-conic-gradient(#fff 0 25%, #d4d0c8 0 50%) 0 0 / 2px 2px;
}
.tb.pressed {
  border: 1px solid;
  border-color: #808080 #fff #fff #808080;
}
.drop {
  flex: none;
  width: 13px;
  height: 22px;
}
.drop::after {
  content: "";
  display: block;
  width: 0;
  margin: 0 auto;
  border: 3px solid transparent;
  border-top-color: #000;
  border-bottom: 0;
}
.sep {
  flex: none;
  width: 2px;
  height: 18px;
  margin: 0 3px;
  border-left: 1px solid #808080;
  border-right: 1px solid #fff;
}
.combo {
  display: flex;
  flex: none;
  height: 21px;
  position: relative;
  border: 1px solid;
  border-color: #808080 #fff #fff #808080;
  box-shadow: inset 1px 1px #404040;
  background-color: #fff;
}
.combo select {
  appearance: none;
  width: 100%;
  padding: 0 3px 2px;
  border: 0;
  background: none;
  font: inherit;
  color: #000;
}
.combo::before {
  content: "";
  position: absolute;
  right: 1px;
  top: 1px;
  width: 16px;
  height: 17px;
  background-color: #d4d0c8;
  border: 1px solid;
  border-color: #fff #404040 #404040 #fff;
  box-shadow: inset -1px -1px #808080;
  pointer-events: none;
}
.combo::after {
  content: "";
  position: absolute;
  right: 5px;
  top: 8px;
  border: 4px solid transparent;
  border-top-color: #000;
  border-bottom: 0;
  pointer-events: none;
}
.zoom {
  width: 55px;
  margin: 0 5px;
}
.font {
  width: 160px;
  margin-right: 12px;
}
.size {
  width: 47px;
  margin-right: 5px;
}

/* document window */
.doc {
  display: flex;
  flex-direction: column;
  flex: 1;
  min-height: 0;
  margin: 7px 0 2px 7px;
  padding: 2px 0 2px 2px;
  border-top: 1px solid #fff;
  border-left: 1px solid #fff;
  border-bottom: 2px solid #606060;
}
.work {
  display: grid;
  grid-template-columns: 24px 1fr 16px;
  grid-template-rows: 25px 1fr 16px;
  flex: 1;
  min-height: 0;
}
.hruler-row {
  grid-column: 1 / 3;
  padding: 6px 70px 0 94px;
}
.hruler {
  position: relative;
  height: 13px;
  background: linear-gradient(to right, #808080 97px, #fff 97px, #fff calc(100% - 96px), #d4d0c8 calc(100% - 96px), #d4d0c8 calc(100% - 94px), #808080 calc(100% - 94px));
}
.hruler::after {
  content: "";
  position: absolute;
  left: 145px;
  right: 96px;
  top: 13px;
  height: 3px;
  background: repeating-linear-gradient(to right, #000 0 1px, transparent 1px 48px);
}
.marks {
  display: flex;
  height: 13px;
  margin-left: 73px;
  margin-right: -3px;
}
.marks span, .vmarks span {
  display: flex;
  flex: 1 1 0;
  min-width: 0;
  min-height: 0;
  align-items: center;
  justify-content: center;
  font-size: 10px;
  line-height: 15px;
}
.marks .tick::before {
  content: "";
  width: 1px;
  height: 5px;
  background-color: #000;
}
.marks .dot::before {
  content: "";
  width: 1px;
  height: 2px;
  background-color: #000;
}
.indent {
  position: absolute;
  left: 92px;
  top: -3px;
  width: 11px;
  height: 24px;
}
.indent-right {
  position: absolute;
  right: 91px;
  top: 4px;
  width: 11px;
  height: 13px;
}
.vruler {
  grid-row: 2;
  padding-left: 5px;
  padding-right: 5px;
  overflow: hidden;
}
.vmarks {
  display: flex;
  flex-direction: column;
  width: 14px;
  height: 488px;
  padding-top: 108px;
  background-color: #fff;
}
.vmarks span {
  writing-mode: vertical-rl;
  transform: rotate(180deg);
}
.vmarks .tick::before {
  content: "";
  width: 5px;
  height: 1px;
  background-color: #000;
}
.vmarks .dot::before {
  content: "";
  width: 2px;
  height: 1px;
  background-color: #000;
}
.canvas {
  grid-row: 2;
  display: flex;
  padding: 9px 70px 0 70px;
  background-color: #808080;
  overflow: hidden;
}
.page {
  flex: 1;
  background-color: #fff;
  border: 1px solid #000;
  border-bottom: 0;
  box-shadow: 3px 5px #000;
}

/* scroll bars */
.vscroll {
  grid-row: 1 / 3;
  grid-column: 3;
  display: flex;
  flex-direction: column;
  padding-top: 1px;
}
.vscroll .thumb {
  height: 201px;
  margin-bottom: auto;
}
.hscroll {
  grid-column: 1 / 3;
  display: flex;
}
.hscroll .thumb {
  flex: 1;
  margin-right: 2px;
}
.sb, .thumb {
  background-color: #d4d0c8;
  border: 1px solid;
  border-color: #fff #404040 #404040 #fff;
  box-shadow: inset -1px -1px #808080;
}
.sb {
  display: flex;
  flex-direction: column;
  align-items: center;
  justify-content: center;
  gap: 1px;
  width: 16px;
  height: 16px;
}
.sb::before, .twice::after {
  content: "";
  border: 4px solid transparent;
}
.up::before, .up::after {
  border-bottom-color: #000;
  border-top: 0;
}
.down::before, .down::after {
  border-top-color: #000;
  border-bottom: 0;
}
.left::before {
  border-right-color: #000;
  border-left: 0;
}
.right::before {
  border-left-color: #000;
  border-right: 0;
}
```
